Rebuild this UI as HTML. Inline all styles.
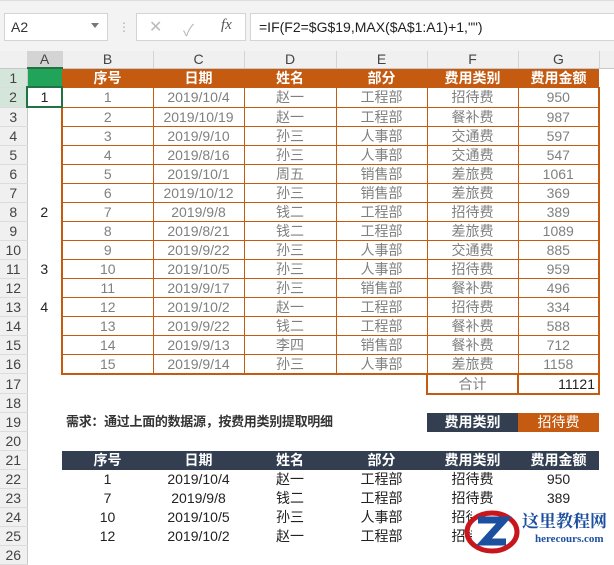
<!DOCTYPE html><html><head><meta charset="utf-8"><style>
*{margin:0;padding:0;box-sizing:border-box}
body{width:614px;height:554px;overflow:hidden;background:#fff;font-family:"Liberation Sans","Noto Sans CJK SC",sans-serif;position:relative}
.top{position:absolute;left:0;top:0;width:614px;height:52px;background:#f3f3f3;border-top:1px solid #ddd}
.nb{position:absolute;left:4px;top:12px;width:104px;height:28px;background:#fff;border:1px solid #d4d4d4;font-size:14px;padding:5px 6px;color:#333}
.nb i{position:absolute;right:8px;top:9px;border:4px solid transparent;border-top:5px solid #777}
.dots{position:absolute;left:118px;top:19px;color:#aaa;font-size:12px}
.fx{position:absolute;left:136px;top:12px;width:110px;height:28px;background:#fff;border:1px solid #d4d4d4;color:#bbb;font-size:16px}
.ff{position:absolute;left:250px;top:12px;width:370px;height:28px;background:#fff;border:1px solid #d4d4d4;font-size:14px;padding:5px 8px;color:#222}
table{position:absolute;left:0;top:51px;border-collapse:collapse;table-layout:fixed;width:614px}
td{height:19px;padding:0;font-size:14px;line-height:18px;text-align:center;white-space:nowrap;overflow:visible;color:#222}
tr.ch td{height:17px;background:#f0f0f0;color:#444;border-right:1px solid #d4d4d4;border-bottom:1px solid #c8c8c8;line-height:16px}
td.h{background:#f0f0f0;border-right:1px solid #c8c8c8;border-bottom:1px solid #dcdcdc;color:#444}
.o td.c{background:#c55a11;color:#fff;font-weight:bold}
.d td.c{color:#808080;border:1px solid #c55a11}
.k td.c{background:#333f50;color:#fff;font-weight:bold}
</style></head><body>
<div class="top">
<div class="nb">A2<i></i></div><div class="dots">⋮</div>
<div class="fx"><span style="position:absolute;left:12px;top:3px">✕</span><span style="position:absolute;left:46px;top:3px">✓</span><span style="position:absolute;left:84px;top:3px;color:#555;font-style:italic;font-family:'Liberation Serif',serif;font-size:15px">fx</span></div>
<div class="ff">=IF(F2=$G$19,MAX($A$1:A1)+1,"")</div>
</div>
<table>
<colgroup><col style="width:27px"><col style="width:35px"><col style="width:91px"><col style="width:91px"><col style="width:92px"><col style="width:91px"><col style="width:91px"><col style="width:81px"><col style="width:15px"></colgroup>
<tr class="ch"><td></td><td style="background:#d4d4d4;border-bottom:2px solid #217346">A</td><td>B</td><td>C</td><td>D</td><td>E</td><td>F</td><td>G</td><td></td></tr>
<tr class="o"><td class="h" style="background:#d3e6d9">1</td><td style="background:#21a35a"></td><td class="c">序号</td><td class="c">日期</td><td class="c">姓名</td><td class="c">部分</td><td class="c">费用类别</td><td class="c">费用金额</td><td></td></tr>
<tr class="d"><td class="h" style="background:#d3e6d9">2</td><td style="border:2px solid #217346">1</td><td class="c" style="border-left-width:2px">1</td><td class="c">2019/10/4</td><td class="c">赵一</td><td class="c">工程部</td><td class="c">招待费</td><td class="c" style="border-right-width:2px">950</td><td></td></tr>
<tr class="d"><td class="h">3</td><td></td><td class="c" style="border-left-width:2px">2</td><td class="c">2019/10/19</td><td class="c">赵一</td><td class="c">工程部</td><td class="c">餐补费</td><td class="c" style="border-right-width:2px">987</td><td></td></tr>
<tr class="d"><td class="h">4</td><td></td><td class="c" style="border-left-width:2px">3</td><td class="c">2019/9/10</td><td class="c">孙三</td><td class="c">人事部</td><td class="c">交通费</td><td class="c" style="border-right-width:2px">597</td><td></td></tr>
<tr class="d"><td class="h">5</td><td></td><td class="c" style="border-left-width:2px">4</td><td class="c">2019/8/16</td><td class="c">孙三</td><td class="c">人事部</td><td class="c">交通费</td><td class="c" style="border-right-width:2px">547</td><td></td></tr>
<tr class="d"><td class="h">6</td><td></td><td class="c" style="border-left-width:2px">5</td><td class="c">2019/10/1</td><td class="c">周五</td><td class="c">销售部</td><td class="c">差旅费</td><td class="c" style="border-right-width:2px">1061</td><td></td></tr>
<tr class="d"><td class="h">7</td><td></td><td class="c" style="border-left-width:2px">6</td><td class="c">2019/10/12</td><td class="c">孙三</td><td class="c">销售部</td><td class="c">差旅费</td><td class="c" style="border-right-width:2px">369</td><td></td></tr>
<tr class="d"><td class="h">8</td><td>2</td><td class="c" style="border-left-width:2px">7</td><td class="c">2019/9/8</td><td class="c">钱二</td><td class="c">工程部</td><td class="c">招待费</td><td class="c" style="border-right-width:2px">389</td><td></td></tr>
<tr class="d"><td class="h">9</td><td></td><td class="c" style="border-left-width:2px">8</td><td class="c">2019/8/21</td><td class="c">钱二</td><td class="c">工程部</td><td class="c">差旅费</td><td class="c" style="border-right-width:2px">1089</td><td></td></tr>
<tr class="d"><td class="h">10</td><td></td><td class="c" style="border-left-width:2px">9</td><td class="c">2019/9/22</td><td class="c">孙三</td><td class="c">人事部</td><td class="c">交通费</td><td class="c" style="border-right-width:2px">885</td><td></td></tr>
<tr class="d"><td class="h">11</td><td>3</td><td class="c" style="border-left-width:2px">10</td><td class="c">2019/10/5</td><td class="c">孙三</td><td class="c">人事部</td><td class="c">招待费</td><td class="c" style="border-right-width:2px">959</td><td></td></tr>
<tr class="d"><td class="h">12</td><td></td><td class="c" style="border-left-width:2px">11</td><td class="c">2019/9/17</td><td class="c">孙三</td><td class="c">销售部</td><td class="c">餐补费</td><td class="c" style="border-right-width:2px">496</td><td></td></tr>
<tr class="d"><td class="h">13</td><td>4</td><td class="c" style="border-left-width:2px">12</td><td class="c">2019/10/2</td><td class="c">赵一</td><td class="c">工程部</td><td class="c">招待费</td><td class="c" style="border-right-width:2px">334</td><td></td></tr>
<tr class="d"><td class="h">14</td><td></td><td class="c" style="border-left-width:2px">13</td><td class="c">2019/9/22</td><td class="c">钱二</td><td class="c">工程部</td><td class="c">餐补费</td><td class="c" style="border-right-width:2px">588</td><td></td></tr>
<tr class="d"><td class="h">15</td><td></td><td class="c" style="border-left-width:2px">14</td><td class="c">2019/9/13</td><td class="c">李四</td><td class="c">销售部</td><td class="c">餐补费</td><td class="c" style="border-right-width:2px">712</td><td></td></tr>
<tr class="d"><td class="h">16</td><td></td><td class="c" style="border-left-width:2px;border-bottom-width:2px">15</td><td class="c" style="border-bottom-width:2px">2019/9/14</td><td class="c" style="border-bottom-width:2px">孙三</td><td class="c" style="border-bottom-width:2px">人事部</td><td class="c" style="border-bottom-width:2px">差旅费</td><td class="c" style="border-right-width:2px;border-bottom-width:2px">1158</td><td></td></tr>
<tr class="d"><td class="h">17</td><td></td><td></td><td></td><td></td><td></td><td class="c" style="border-width:2px">合计</td><td class="c" style="border-width:2px;color:#222;text-align:right;padding-right:3px">11121</td><td></td></tr>
<tr><td class="h">18</td><td></td><td></td><td></td><td></td><td></td><td></td><td></td><td></td></tr>
<tr class="k"><td class="h">19</td><td></td><td colspan="4" style="text-align:left;padding-left:4px;color:#333;font-weight:bold;font-size:13px;letter-spacing:-0.3px">需求：通过上面的数据源，按费用类别提取明细</td><td class="c">费用类别</td><td class="c" style="background:#c55a11;font-weight:normal">招待费</td><td></td></tr>
<tr><td class="h">20</td><td></td><td></td><td></td><td></td><td></td><td></td><td></td><td></td></tr>
<tr class="k"><td class="h">21</td><td></td><td class="c">序号</td><td class="c">日期</td><td class="c">姓名</td><td class="c">部分</td><td class="c">费用类别</td><td class="c">费用金额</td><td></td></tr>
<tr><td class="h">22</td><td></td><td>1</td><td>2019/10/4</td><td>赵一</td><td>工程部</td><td>招待费</td><td>950</td><td></td></tr>
<tr><td class="h">23</td><td></td><td>7</td><td>2019/9/8</td><td>钱二</td><td>工程部</td><td>招待费</td><td>389</td><td></td></tr>
<tr><td class="h">24</td><td></td><td>10</td><td>2019/10/5</td><td>孙三</td><td>人事部</td><td>招待费</td><td></td><td></td></tr>
<tr><td class="h">25</td><td></td><td>12</td><td>2019/10/2</td><td>赵一</td><td>工程部</td><td>招待费</td><td></td><td></td></tr>
<tr><td class="h">26</td><td></td><td></td><td></td><td></td><td></td><td></td><td></td><td></td></tr>
</table>
<div style="position:absolute;left:472px;top:506px;width:142px;height:48px;background:#fff"></div>
<svg style="position:absolute;left:462px;top:508px" width="60" height="46"><ellipse cx="30" cy="24" rx="25" ry="19" fill="none" stroke="#c8161d" stroke-width="5"/><path d="M16 12h26L22 34h22" fill="none" stroke="#1d4fa0" stroke-width="7"/></svg>
<div style="position:absolute;left:522px;top:510px;white-space:nowrap;font-family:'Noto Serif CJK SC',serif;font-weight:bold;font-size:17px;color:#1d4fa0;line-height:20px">这里教程网</div>
<div style="position:absolute;left:535px;top:533px;white-space:nowrap;font-family:'Liberation Serif',serif;font-weight:bold;font-size:11px;color:#1d4fa0">herecours.com</div>
</body></html>
